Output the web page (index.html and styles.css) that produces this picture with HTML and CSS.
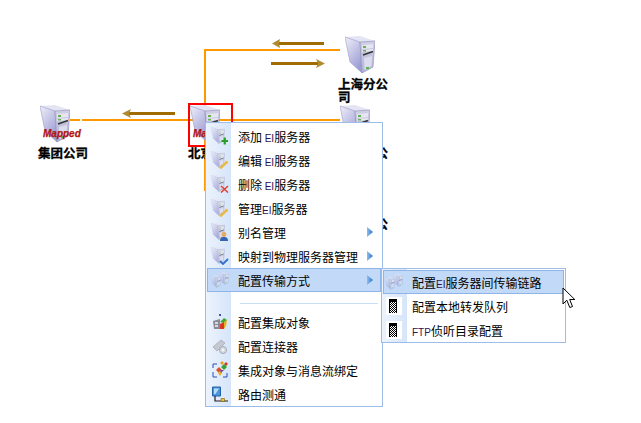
FILE: index.html
```html
<!DOCTYPE html>
<html lang="zh-CN">
<head>
<meta charset="utf-8">
<title>配置传输方式</title>
<link rel="stylesheet" href="styles.css">
</head>
<body>
<svg class="defs" aria-hidden="true">
  <defs>
    <linearGradient id="gL" x1="0" y1="0" x2="0.6" y2="1"><stop offset="0" stop-color="#f0f0fa"/><stop offset="1" stop-color="#9c9cd4"/></linearGradient>
    <linearGradient id="gR" x1="0" y1="0" x2="0" y2="1"><stop offset="0" stop-color="#cfcfe4"/><stop offset="1" stop-color="#b4b4da"/></linearGradient>
    <linearGradient id="gTri" x1="0" y1="0" x2="1" y2="0"><stop offset="0" stop-color="#8fc0ee"/><stop offset="1" stop-color="#2a70c8"/></linearGradient>
    <pattern id="dither" width="2" height="2" patternUnits="userSpaceOnUse"><rect width="2" height="2" fill="#fff"/><rect width="1" height="1" fill="#000"/><rect x="1" y="1" width="1" height="1" fill="#000"/></pattern>
    <symbol id="srv" viewBox="0 0 30 38">
      <path d="M0 1 15 0 30 5 15 6z" fill="#e4e4f4"/>
      <path d="M0 1 15 6 17 37 5 26z" fill="url(#gL)" stroke="#9a9ac8" stroke-width=".6"/>
      <path d="M15 6 30 5 28 31 17 37z" fill="url(#gR)" stroke="#8a8ab4" stroke-width=".6"/>
      <path d="M17 9 28 8 28 12 17 13zM17 14 28 13 28 15 17 16z" fill="#e6e6f2"/>
      <path d="M18 10h3v2h-3zM18 14h3v1.500h-3z" fill="#6ab04c"/>
      <path d="M18 19 28 15.500" stroke="#333" stroke-width="1.500"/>
      <path d="M19 22 27 20 26.500 30 19.500 34z" fill="#dcdcee"/>
      <path d="M21 31h3v2h-3z" fill="#58b848"/>
    </symbol>
    <symbol id="srv-map" viewBox="0 0 42 38">
      <use href="#srv" width="30" height="38"/>
      <text x="3" y="32" class="mapped">Mapped</text>
    </symbol>
  </defs>
</svg>

<main class="stage">
  <svg class="wires" width="641" height="423" aria-hidden="true">
    <path class="wire" d="M70 120H80M82 120H340M205 191V50H340"/>
    <path class="shaft" d="M128 112h47v3h-47zM279 42h45v3h-45zM271 62h47v3h-47z"/>
    <path class="head" d="M122 113.500 131 109 129 113.500 131 118zM272 43.500 280 39 279 43.500 280 48zM325 63.500 316 59 318 63.500 316 68z"/>
  </svg>

  <div class="node node-group">
    <svg class="node-icon" viewBox="0 0 42 38" aria-hidden="true"><use href="#srv-map"/></svg>
    <div class="node-label">集团公司</div>
  </div>
  <div class="node node-shanghai">
    <svg class="node-icon" viewBox="0 0 42 38" aria-hidden="true"><use href="#srv" width="30" height="38"/></svg>
    <div class="node-label">上海分公司</div>
  </div>
  <div class="node node-beijing">
    <svg class="node-icon" viewBox="0 0 42 38" aria-hidden="true"><use href="#srv-map"/></svg>
    <div class="node-label node-label-line">北京分公司</div>
  </div>
  <div class="node node-branch-a">
    <svg class="node-icon" viewBox="0 0 42 38" aria-hidden="true"><use href="#srv" width="30" height="38"/></svg>
    <div class="node-label node-label-tail">分公司</div>
  </div>
  <div class="node node-branch-b">
    <svg class="node-icon" viewBox="0 0 42 38" aria-hidden="true"><use href="#srv" width="30" height="38"/></svg>
    <div class="node-label node-label-tail">分公司</div>
  </div>
  <div class="selection"></div>

  <ul class="menu menu-main">
    <li class="item">
      <svg class="ico" viewBox="0 0 18 18"><use class="faded" href="#srv" width="14" height="17"/><path d="M10.500 14h6.500M13.750 10.500v7" stroke="#28a028" stroke-width="2.200"/></svg>
      <span>添加 <b class="lat">EI</b>服务器</span>
    </li>
    <li class="item">
      <svg class="ico" viewBox="0 0 18 18"><use class="faded" href="#srv" width="14" height="17"/><path d="M9 17.500 16.500 10.500" stroke="#e8b848" stroke-width="2.400"/></svg>
      <span>编辑 <b class="lat">EI</b>服务器</span>
    </li>
    <li class="item">
      <svg class="ico" viewBox="0 0 18 18"><use class="faded" href="#srv" width="14" height="17"/><path d="M10 11 17 17.500M17 11 10 17.500" stroke="#e04030" stroke-width="1.500"/></svg>
      <span>删除 <b class="lat">EI</b>服务器</span>
    </li>
    <li class="item">
      <svg class="ico" viewBox="0 0 18 18"><use class="faded" href="#srv" width="14" height="17"/><path d="M9 17.500 16.500 10.500" stroke="#e8b848" stroke-width="2.400"/></svg>
      <span>管理<b class="lat">EI</b>服务器</span>
    </li>
    <li class="item">
      <svg class="ico" viewBox="0 0 18 18"><use href="#srv" width="14" height="17" opacity=".85"/><circle cx="13" cy="11.500" r="2.400" fill="#e8a860"/><path d="M9 18c0-3.500 2-4 4-4s4 .5 4 4z" fill="#3464b0"/></svg>
      <span>别名管理</span>
      <svg class="tri" viewBox="0 0 6 10"><path d="M0 0 6 5 0 10z" fill="url(#gTri)"/></svg>
    </li>
    <li class="item">
      <svg class="ico" viewBox="0 0 18 18"><use class="faded" href="#srv" width="14" height="17"/><path d="M9 14 12 17 17 12" fill="none" stroke="#3070c8" stroke-width="1.800"/></svg>
      <span>映射到物理服务器管理</span>
      <svg class="tri" viewBox="0 0 6 10"><path d="M0 0 6 5 0 10z" fill="url(#gTri)"/></svg>
    </li>
    <li class="item is-active">
      <svg class="ico" viewBox="0 0 18 18"><use class="pale" href="#srv" x="0" y="4" width="10" height="13"/><use class="pale" href="#srv" x="8" y="1" width="10" height="13"/></svg>
      <span>配置传输方式</span>
      <svg class="tri" viewBox="0 0 6 10"><path d="M0 0 6 5 0 10z" fill="url(#gTri)"/></svg>
    </li>
    <li class="sep"></li>
    <li class="item">
      <svg class="ico" viewBox="0 0 18 18"><path d="M2 8 9 6 9 16 3 16z" fill="#8a8a98"/><path d="M4 9h3v2H4zM4 12h3v2H4z" fill="#d8d8e0"/><path d="M8 1h2v2H8z" fill="#3858c0"/><path d="M9 9 13 5 16 7 13 10z" fill="#40a838"/><path d="M9 11 13 9 13 16 9 16z" fill="#d83820"/><path d="M13 9 16 7 15 13 13 16z" fill="#e8b020"/></svg>
      <span>配置集成对象</span>
    </li>
    <li class="item">
      <svg class="ico" viewBox="0 0 18 18"><path d="M2 10 10 3 14 6 6 14z" fill="#c4c8d0" stroke="#a8acb8" stroke-width=".8"/><circle cx="12" cy="13" r="3.500" fill="#d8dbe0" stroke="#a4a8b4"/><circle cx="12" cy="13" r="1.200" fill="#f4f6fa"/></svg>
      <span>配置连接器</span>
    </li>
    <li class="item">
      <svg class="ico" viewBox="0 0 18 18"><path d="M6 3H2V7M2 11V16H6M12 16H16V12" fill="none" stroke="#2850b8" stroke-width="1"/><path d="M9 2 11 0 13 2 11 4z" fill="#e8a020"/><path d="M13 3 15 1 17 3 15 5z" fill="#d83820"/><path d="M10 6 13 3 16 6 13 9z" fill="#38a038"/><path d="M5 9 8 6 11 9 8 12z" fill="#e05020"/><path d="M7 12 9 10 11 12 9 15z" fill="#e8b020"/><path d="M9 9 13 9 10 12z" fill="#7848a8"/></svg>
      <span>集成对象与消息流绑定</span>
    </li>
    <li class="item">
      <svg class="ico" viewBox="0 0 18 18"><path d="M1.500 2H9.500V11H1.500z" fill="#4c94dc" stroke="#2060a8"/><path d="M3 3.500 8 3.500 4.500 9H3z" fill="#b4dcf6"/><path d="M4 11v5H17" fill="none" stroke="#202020" stroke-width="1.200"/><path d="M10 13.500h3.500v3H10z" fill="#e8c030" stroke="#806010" stroke-width=".6"/></svg>
      <span>路由测通</span>
    </li>
  </ul>

  <ul class="menu menu-sub">
    <li class="item is-active">
      <svg class="ico" viewBox="0 0 18 18"><use class="pale" href="#srv" x="0" y="4" width="10" height="13"/><use class="pale" href="#srv" x="8" y="1" width="10" height="13"/></svg>
      <span>配置<b class="lat">EI</b>服务器间传输链路</span>
    </li>
    <li class="item">
      <svg class="ico" viewBox="0 0 18 18"><path d="M1 0H17V18H1z" fill="#fff"/><path d="M4 2H12V16H4z" fill="url(#dither)"/><path d="M4 2H12V5H4z" fill="#000"/><path d="M4.500 2V16M11.500 2V16" stroke="#000"/></svg>
      <span>配置本地转发队列</span>
    </li>
    <li class="item">
      <svg class="ico" viewBox="0 0 18 18"><path d="M1 0H17V18H1z" fill="#fff"/><path d="M4 2H12V16H4z" fill="url(#dither)"/><path d="M4 2H12V5H4z" fill="#000"/><path d="M4.500 2V16M11.500 2V16" stroke="#000"/></svg>
      <span><b class="lat">FTP</b>侦听目录配置</span>
    </li>
  </ul>

  <svg class="cursor" viewBox="0 0 14 22" aria-hidden="true"><path d="M1 1V17L4.800 13.200 7.800 20.500 10.500 19.500 7.700 12.500H12.800z" fill="#fff" stroke="#000" stroke-linejoin="miter"/></svg>
</main>
</body>
</html>
```
FILE: styles.css
```css
* { box-sizing: border-box; }
html, body { margin: 0; padding: 0; background: #fff; }
.defs { position: absolute; width: 0; height: 0; }
.stage {
  position: relative;
  width: 641px;
  height: 423px;
  overflow: hidden;
  font-family: "Noto Sans CJK SC", "Liberation Sans", sans-serif;
  font-size: 12px;
  color: #000;
}
.wires { position: absolute; left: 0; top: 0; }
.wire { fill: none; stroke: #ff9900; stroke-width: 2; }
.shaft { fill: #a06c00; }
.head { fill: #b08a30; }

.node { position: absolute; width: 50px; }
.node-group { left: 38px; top: 105px; }
.node-shanghai { left: 338px; top: 36px; }
.node-beijing { left: 188px; top: 105px; }
.node-branch-a { left: 338px; top: 105px; }
.node-branch-b { left: 338px; top: 176px; }
.node-icon { display: block; width: 42px; height: 38px; margin-left: 2px; }
.node-shanghai .node-icon, .node-branch-b .node-icon { margin-left: 7px; }
.node-label {
  margin-top: 3px;
  font-size: 12.500px;
  line-height: 13px;
  font-weight: 700;
  -webkit-text-stroke: .3px #000;
}
.node-label-line { white-space: nowrap; }
.node-label-tail { margin-left: 25px; }
.mapped {
  font-family: "Liberation Sans", sans-serif;
  font-size: 10px;
  font-weight: 700;
  font-style: italic;
  fill: #b01410;
  stroke: #b01410;
  stroke-width: .25px;
}
.selection {
  position: absolute;
  left: 188px;
  top: 103px;
  width: 45px;
  height: 44px;
  border: 2px solid #ff0000;
}

.menu {
  position: absolute;
  margin: 0;
  list-style: none;
  background: #fff linear-gradient(to right, #ecf3fd, #d6e5f9) no-repeat 0 0 / 25px 100%;
  border: 1px solid #9cbde8;
}
.menu-main { left: 205px; top: 122px; width: 178px; padding: 1px 0 0; }
.menu-sub { left: 381px; top: 268px; width: 185px; padding: 1px 0 0; }
.item {
  display: flex;
  align-items: center;
  height: 24px;
  margin: 0 1px;
  border: 1px solid transparent;
  white-space: pre;
}
.item.is-active { background: #c2daf7; border-color: #8fb5e8; }
.ico { flex: none; width: 18px; height: 18px; margin: 0 9px 0 3px; }
.menu-sub .ico { margin-left: 1px; }
.faded { opacity: .75; }
.pale { opacity: .6; }
.lat {
  font-family: "Liberation Sans", sans-serif;
  font-size: 10px;
  font-weight: 400;
  color: #301050;
}
.tri { flex: none; width: 6px; height: 10px; margin-left: auto; margin-right: 7px; }
.sep { height: 1px; margin: 11px 4px 6px 34px; background: #c8dcf4; }
.cursor { position: absolute; left: 562px; top: 287px; width: 14px; height: 22px; }
```
